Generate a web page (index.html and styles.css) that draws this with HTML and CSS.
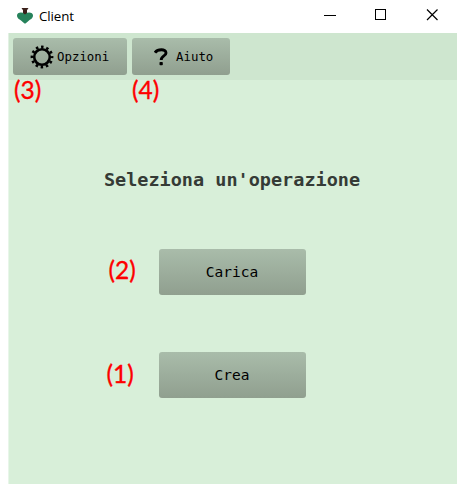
FILE: index.html
```html
<!DOCTYPE html>
<html lang="it">
<head>
<meta charset="utf-8">
<title>Client</title>
<link rel="stylesheet" href="styles.css">
</head>
<body>
<div class="window">
  <header class="titlebar">
    <svg class="logo" width="18" height="18" viewBox="0 0 18 18">
      <path d="M1 8.500C1 5.200 4.500 4.800 9 6C13.500 4.800 17 5.200 17 8.500C17 11.500 14.500 12.200 13 13.500L9.500 16.500H8.500L5 13.500C3.500 12.200 1 11.500 1 8.500Z" fill="#26825b"/>
      <path d="M5.500 1H12.500L11 3.200V6L9 7.500L7 6V3.200Z" fill="#3b211b"/>
    </svg>
    <span class="title">Client</span>
    <svg class="controls" width="118" height="14" viewBox="0 0 118 14" fill="none" stroke="#000">
      <path d="M0 7.500H12"/>
      <rect x="51.500" y="1.500" width="10" height="10"/>
      <path d="M103 1.500L113.500 12M113.500 1.500L103 12" stroke-width="1.200"/>
    </svg>
  </header>
  <nav class="toolbar">
    <button class="btn tool options">
      <svg width="24" height="24" viewBox="-12 -12 24 24" fill="none" stroke="#000">
        <circle r="7.800" stroke-width="2.600"/>
        <circle r="10" stroke-width="2.800" stroke-dasharray="2.500 2.736" stroke-dashoffset="1.250"/>
      </svg>
      <span>Opzioni</span>
    </button>
    <button class="btn tool help">
      <svg width="14" height="18" viewBox="0 0 14 18">
        <path d="M1 4.600C3.500 1 12 .5 12 4.900C12 8.200 7.200 7.600 7.200 12" fill="none" stroke="#000" stroke-width="2.900"/>
        <rect x="5.500" y="14" width="3.300" height="3.300" rx=".8"/>
      </svg>
      <span>Aiuto</span>
    </button>
    <span class="note n3">(3)</span>
    <span class="note n4">(4)</span>
  </nav>
  <main class="content">
    <h1>Seleziona un'operazione</h1>
    <div class="action load"><button class="btn">Carica</button><span class="note">(2)</span></div>
    <div class="action create"><button class="btn">Crea</button><span class="note">(1)</span></div>
  </main>
</div>
</body>
</html>
```

FILE: styles.css
```css
* { box-sizing: border-box; }
body { margin: 0; background: #fff; }
.window { width: 449px; height: 484px; margin-left: 8px; display: flex; flex-direction: column; }
.titlebar { height: 33px; display: flex; align-items: center; padding: 0 15px 2px 8px; }
.title { margin-left: 5px; font: 13.3px/18px "Open Sans", sans-serif; letter-spacing: -.1px; color: #000; }
.controls { margin-left: auto; margin-top: -1px; }
.toolbar { position: relative; height: 47px; display: flex; gap: 5px; padding: 5px 4px; background: #cee6cf; border-left: 1px solid #e2f1e3; }
.btn {
  display: flex; align-items: center; justify-content: center;
  width: 147px; height: 46px; padding: 0; border: 0; border-radius: 3px;
  background: linear-gradient(#a9bcaa, #909f8f);
  font: 14.5px/20px "DejaVu Sans Mono", monospace; color: #000;
}
.tool { height: 37px; font-size: 12.4px; justify-content: flex-start; }
.options { width: 114px; padding-left: 17px; gap: 3px; }
.help { width: 98px; padding-left: 22px; gap: 8px; }
.content { flex: 1; display: flex; flex-direction: column; align-items: center; padding-right: 2px; background: #d8efd9; border-left: 1px solid #e8f6e9; }
h1 { margin: 88px 0 0; font: bold 18.5px/24px "DejaVu Sans Mono", monospace; color: #353b36; }
.action { position: relative; }
.load { margin-top: 57px; }
.create { margin-top: 57px; }
.note { position: absolute; font: 24.5px/30px Lato, sans-serif; color: #fe0000; -webkit-text-stroke: .35px #fe0000; white-space: nowrap; }
.n3 { left: 5px; top: 42px; }
.n4 { left: 123px; top: 42px; }
.load .note { left: -50px; top: 6px; }
.create .note { left: -52px; top: 7px; }
```
